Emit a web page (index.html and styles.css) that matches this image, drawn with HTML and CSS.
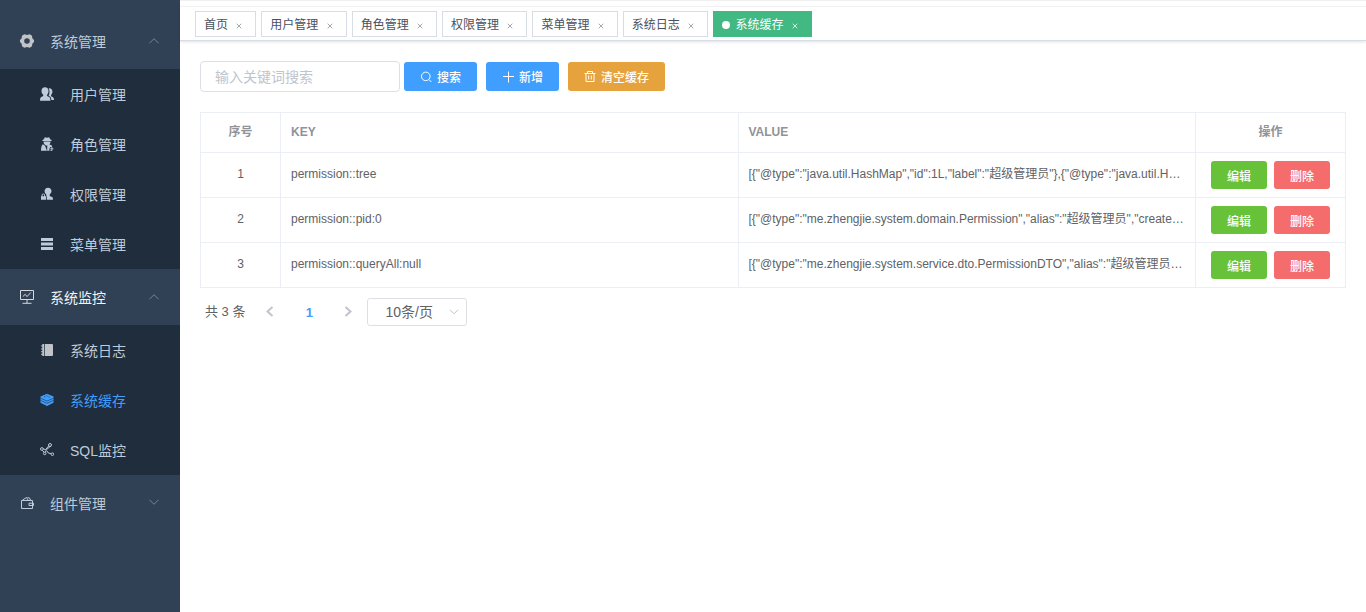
FILE: index.html
```html
<!DOCTYPE html>
<html lang="zh-CN">
<head>
<meta charset="utf-8">
<title>系统缓存</title>
<link rel="stylesheet" href="styles.css">
</head>
<body>
<div class="app">
  <nav class="sidebar">
    <button class="menu-title" type="button">
      <svg class="icon icon-grey" viewBox="0 0 14 14"><path fill-rule="evenodd" d="M4.300 0.200 7 1 9.700 0.200 12 1.700 12.300 4.300 14 6V8L12.300 9.700 12 12.300 9.700 13.800 7 13 4.300 13.800 2 12.300 1.700 9.700 0 8V6L1.700 4.300 2 1.700ZM7 4.200A2.800 2.800 0 1 0 7 9.800 2.800 2.800 0 0 0 7 4.200Z"/></svg>
      <span>系统管理</span>
      <svg class="arrow" viewBox="0 0 12 12"><path d="M1.500 8.200 6 3.700l4.500 4.500"/></svg>
    </button>
    <div class="submenu">
      <a class="menu-item" href="#"><svg class="icon" viewBox="0 0 14 14"><path d="M5 0.200C7.200 0.200 8.500 1.700 8.500 4 8.500 5.700 7.900 7 7.100 7.800V9L9.600 10.300Q10.400 10.800 10.400 13.800H0Q0 10.800 0.800 10.300L3.200 9V7.800C2.200 7 1.500 5.700 1.500 4 1.500 1.700 2.800 0.200 5 0.200Z"/><path d="M8.700 1.400C10.900 1 12.400 2.600 12.400 4.800 12.400 6.200 11.800 7.300 11.100 8V9.200L13 10.200Q14 10.800 14 13H11.300Q11.300 10.400 10.300 9.700L8.700 8.700V8.200Q9.500 6.800 9.500 4.500 9.500 2.800 8.700 1.400Z"/></svg><span>用户管理</span></a>
      <a class="menu-item" href="#"><svg class="icon" viewBox="0 0 14 14"><path d="M3.900 2.200 4.800 0.200 7 0.700 9.200 0.200 10.100 2.200 11.600 3V4H2.400V3ZM3.500 4.500H10.500Q10.500 7.900 7 8.700 3.500 7.900 3.500 4.500ZM2.800 7.300 5 8.800 7 13.800H1Q1 9 2.800 7.300ZM7.200 9.300 9.500 7.600 11.600 8.300 12.200 10 10 10.200 9.400 12 9.400 13.800H7.200Z"/><path d="M10.300 11.200H11.400V10.300H12.400V11.200H13.300V12.200H12.400V13.800H10.300V12.900H11.400V12.200H10.300Z"/></svg><span>角色管理</span></a>
      <a class="menu-item" href="#"><svg class="icon" viewBox="0 0 14 14"><path d="M8 0.800C10.100 0.800 11.500 2.200 11.500 4 11.500 5.700 10.500 6.700 9.700 7.500V9L12.500 10.300Q13 10.700 13 12.800H7V9.500H6.300V7.500C5.200 6.600 4.600 5.500 4.600 4 4.600 2.200 5.900 0.800 8 0.800Z"/><path fill-rule="evenodd" d="M1 9.300H1.600V8.200Q1.600 6.400 3.300 6.400 5 6.400 5 8.200V9.300H6.200V12.800H1ZM2.500 9.300H4.100V8.200Q4.100 7.300 3.300 7.300 2.500 7.300 2.500 8.200Z"/></svg><span>权限管理</span></a>
      <a class="menu-item" href="#"><svg class="icon" viewBox="0 0 14 14"><path d="M1 1h12v3H1zM1 5.500h12v3H1zM1 10h12v3H1z"/></svg><span>菜单管理</span></a>
    </div>
    <button class="menu-title menu-title-active" type="button">
      <svg class="icon icon-line icon-light" viewBox="0 0 14 14"><path d="M0.500 0.500H13.500V9.500H0.500ZM7 9.500V13M2.500 13.300H11.500M2.800 6.600 5.200 4.300 7 6.600 10.800 2.500"/></svg>
      <span>系统监控</span>
      <svg class="arrow" viewBox="0 0 12 12"><path d="M1.500 8.200 6 3.700l4.500 4.500"/></svg>
    </button>
    <div class="submenu">
      <a class="menu-item" href="#"><svg class="icon icon-grey" viewBox="0 0 14 14"><path d="M5 1H12Q13 1 13 2V12Q13 13 12 13H5ZM2.300 1H4.300V13H2.300V11.800H1V10.800H2.300V9.200H1V8.200H2.300V6.400H1V5.400H2.300V3.600H1V2.600H2.300Z"/></svg><span>系统日志</span></a>
      <a class="menu-item menu-item-active" href="#"><svg class="icon" viewBox="0 0 14 14"><path d="M7 0.800 13.500 3.600V9.800L7 13 0.500 9.800V3.600Z"/><path class="cut" d="M0.500 5.200 7 8.100 13.500 5.200M0.500 7.400 7 10.300 13.500 7.400M4 3.500 5.500 4.200M6.300 2.500 7.800 3.200M8.500 3.700 10 4.400"/></svg><span>系统缓存</span></a>
      <a class="menu-item" href="#"><svg class="icon icon-line" viewBox="0 0 14 14"><circle cx="1.900" cy="6" r="1.400"/><circle cx="10" cy="2" r="1.500"/><circle cx="4.700" cy="10.400" r="1.300"/><circle cx="12.400" cy="11.200" r="1.300"/><path d="M3.200 5.600 5.300 6.800 8.900 2.800M2.300 7.300 4.200 9.300M5.300 9.300 6.700 6.400 10.500 3.300M7 8 8 9.800 11.200 10.800"/></svg><span>SQL监控</span></a>
    </div>
    <button class="menu-title" type="button">
      <svg class="icon icon-line" viewBox="0 0 14 14"><path d="M1.500 4.500H12.500V12.500H1.500ZM2.500 4 6.500 1.500 8 4M7.500 1.500 9.500 2 10.500 4M12.500 7.200H9V9.500H13.500V7.200Z"/></svg>
      <span>组件管理</span>
      <svg class="arrow" viewBox="0 0 12 12"><path d="M1.500 2.800 6 7.300l4.500-4.500"/></svg>
    </button>
  </nav>

  <div class="main">
    <header class="navbar"></header>
    <div class="tags">
      <div class="tag"><a href="#">首页</a> <button class="close" type="button" aria-label="关闭"><svg viewBox="0 0 16 16"><path d="M5.700 5.700l4.600 4.600M10.300 5.700l-4.600 4.600"/></svg></button></div>
      <div class="tag"><a href="#">用户管理</a> <button class="close" type="button" aria-label="关闭"><svg viewBox="0 0 16 16"><path d="M5.700 5.700l4.600 4.600M10.300 5.700l-4.600 4.600"/></svg></button></div>
      <div class="tag"><a href="#">角色管理</a> <button class="close" type="button" aria-label="关闭"><svg viewBox="0 0 16 16"><path d="M5.700 5.700l4.600 4.600M10.300 5.700l-4.600 4.600"/></svg></button></div>
      <div class="tag"><a href="#">权限管理</a> <button class="close" type="button" aria-label="关闭"><svg viewBox="0 0 16 16"><path d="M5.700 5.700l4.600 4.600M10.300 5.700l-4.600 4.600"/></svg></button></div>
      <div class="tag"><a href="#">菜单管理</a> <button class="close" type="button" aria-label="关闭"><svg viewBox="0 0 16 16"><path d="M5.700 5.700l4.600 4.600M10.300 5.700l-4.600 4.600"/></svg></button></div>
      <div class="tag"><a href="#">系统日志</a> <button class="close" type="button" aria-label="关闭"><svg viewBox="0 0 16 16"><path d="M5.700 5.700l4.600 4.600M10.300 5.700l-4.600 4.600"/></svg></button></div>
      <div class="tag tag-active"><span class="dot"></span> <a href="#">系统缓存</a> <button class="close" type="button" aria-label="关闭"><svg viewBox="0 0 16 16"><path d="M5.700 5.700l4.600 4.600M10.300 5.700l-4.600 4.600"/></svg></button></div>
    </div>

    <main class="content">
      <div class="toolbar">
        <input class="search" type="text" placeholder="输入关键词搜索" aria-label="输入关键词搜索">
        <div class="actions">
          <button class="btn btn-primary" type="button"><svg viewBox="0 0 12 12"><circle cx="5.800" cy="5.400" r="4.300"/><path d="M8.900 8.500 11.400 11"/></svg><span>搜索</span></button>
          <button class="btn btn-primary" type="button"><svg viewBox="0 0 12 12"><path d="M6.500 0.500V11.500M1 5.500H12"/></svg><span>新增</span></button>
          <button class="btn btn-warning" type="button"><svg viewBox="0 0 12 12"><path d="M0.500 2.500H11.500M3.500 2.500V0.500H8.500V2.500M2 2.500V10.500H10V2.500M4.700 4.500V8.500M7.300 4.500V8.500"/></svg><span>清空缓存</span></button>
        </div>
      </div>

      <table class="table">
        <colgroup><col class="col-index"><col><col><col class="col-ops"></colgroup>
        <thead>
          <tr><th class="center">序号</th><th>KEY</th><th>VALUE</th><th class="center">操作</th></tr>
        </thead>
        <tbody>
          <tr>
            <td class="center">1</td><td>permission::tree</td>
            <td><div class="ellipsis">[{"@type":"java.util.HashMap","id":1L,"label":"超级管理员"},{"@type":"java.util.HashMap","id":2L}]</div></td>
            <td class="ops-cell"><div class="ops"><button class="btn-small btn-success" type="button">编辑</button><button class="btn-small btn-danger" type="button">删除</button></div></td>
          </tr>
          <tr>
            <td class="center">2</td><td>permission::pid:0</td>
            <td><div class="ellipsis">[{"@type":"me.zhengjie.system.domain.Permission","alias":"超级管理员","createTime":1543827724000}]</div></td>
            <td class="ops-cell"><div class="ops"><button class="btn-small btn-success" type="button">编辑</button><button class="btn-small btn-danger" type="button">删除</button></div></td>
          </tr>
          <tr>
            <td class="center">3</td><td>permission::queryAll:null</td>
            <td><div class="ellipsis">[{"@type":"me.zhengjie.system.service.dto.PermissionDTO","alias":"超级管理员","createTime":1543827724000}]</div></td>
            <td class="ops-cell"><div class="ops"><button class="btn-small btn-success" type="button">编辑</button><button class="btn-small btn-danger" type="button">删除</button></div></td>
          </tr>
        </tbody>
      </table>

      <div class="pagination">
        <span class="total">共 3 条</span>
        <button class="page" type="button" aria-label="上一页"><svg viewBox="0 0 12 12"><path d="M8.500 1 3.500 5.500 8.500 10"/></svg></button>
        <button class="page page-current" type="button">1</button>
        <button class="page" type="button" aria-label="下一页"><svg viewBox="0 0 12 12"><path d="M3.500 1 8.500 5.500 3.500 10"/></svg></button>
        <div class="size">
          <select aria-label="每页条数"><option>10条/页</option><option>20条/页</option></select>
          <svg class="size-arrow" viewBox="0 0 12 12"><path d="M2 3.800 6 7.800l4-4"/></svg>
        </div>
      </div>
    </main>
  </div>
</div>
</body>
</html>
```
FILE: styles.css
```css
* { box-sizing: border-box; }
body {
  margin: 0;
  color: #606266;
  background: #fff;
  font: 12px/24px "Liberation Sans", "Noto Sans CJK SC", sans-serif;
}
button, input, select { margin: 0; font-family: inherit; }
button { padding: 0; border: 0; background: none; cursor: pointer; }
a { color: inherit; text-decoration: none; }

.app { display: flex; min-height: 100vh; }

.sidebar {
  flex: none;
  width: 180px;
  padding-top: 13px;
  color: #bfcbd9;
  background: #304156;
}
.menu-title, .menu-item {
  display: flex;
  align-items: center;
  gap: 16px;
  width: 100%;
  color: inherit;
  font-size: 14px;
  line-height: 24px;
}
.menu-title { height: 56px; padding: 0 20px; }
.menu-title-active { color: #f4f4f5; }
.submenu { background: #1f2d3d; }
.menu-item { height: 50px; padding: 0 20px 0 40px; }
.menu-title span, .menu-item span { padding-top: 2px; }
.menu-item-active { color: #409eff; }
.icon { width: 14px; height: 14px; fill: currentColor; }
.icon-grey { fill: #c0c4c8; }
.icon-line { fill: none; stroke: currentColor; }
.icon-light { color: #d5d9de; }
.cut { fill: none; stroke: #1f2d3d; stroke-width: 0.6; }
.arrow { width: 12px; height: 12px; margin-left: auto; fill: none; stroke: #7b8491; }

.main { flex: 1; min-width: 0; }
.navbar { height: 7px; border-top: 1px solid #f0f0f0; border-bottom: 1px solid #f6f6f6; }
.tags {
  display: flex;
  gap: 5px;
  height: 34px;
  padding: 4px 15px 0;
  border-bottom: 1px solid #d8dce5;
  box-shadow: 0 1px 3px rgba(0, 0, 0, 0.12);
}
.tag {
  height: 26px;
  padding: 0 8px;
  border: 1px solid #d8dce5;
  color: #495060;
  line-height: 26px;
  white-space: nowrap;
}
.tag-active { border-color: #42b983; color: #fff; background: #42b983; }
.dot {
  display: inline-block;
  width: 8px;
  height: 8px;
  margin-right: 2px;
  border-radius: 50%;
  background: #fff;
}
.close { width: 16px; height: 16px; color: #a3a7af; vertical-align: middle; }
.tag-active .close { color: #d5efe3; }
.close svg { display: block; fill: none; stroke: currentColor; }

.content { padding: 20px; }
.toolbar { display: flex; align-items: center; gap: 4px; margin-bottom: 20px; }
.search {
  width: 200px;
  height: 31px;
  padding: 0 14px;
  border: 1px solid #dcdfe6;
  border-radius: 4px;
  color: #606266;
  font-size: 14px;
}
.search::placeholder { color: #c0c4cc; }
.actions { display: flex; gap: 9px; }
.btn {
  display: flex;
  align-items: center;
  gap: 5px;
  height: 29px;
  padding: 0 16px;
  border-radius: 3px;
  color: #fff;
  font-size: 12px;
  font-weight: 500;
}
.btn svg { width: 12px; height: 12px; fill: none; stroke: currentColor; }
.btn-primary { background: #409eff; }
.btn-warning { background: #e6a23c; }

.table { width: 100%; border-collapse: collapse; table-layout: fixed; }
.col-index { width: 80px; }
.col-ops { width: 150px; }
.table th, .table td { padding: 0 10px 2px; border: 1px solid #ebeef5; text-align: left; }
.table th { height: 40px; color: #909399; font-weight: 700; }
.table td { height: 45px; }
.table .ops-cell { padding: 0 10px; }
.table .center { text-align: center; }
.ellipsis { overflow: hidden; text-overflow: ellipsis; white-space: nowrap; }
.ops { display: flex; justify-content: center; gap: 7px; }
.btn-small {
  width: 56px;
  height: 28px;
  border-radius: 3px;
  color: #fff;
  font-size: 12px;
  font-weight: 500;
}
.btn-success { background: #67c23a; }
.btn-danger { background: #f56c6c; }

.pagination { display: flex; align-items: center; padding: 10px 5px; font-size: 13px; }
.total { margin-right: 11px; }
.page {
  display: flex;
  align-items: center;
  justify-content: center;
  width: 28px;
  height: 28px;
  color: #c0c4cc;
  font-size: 13px;
}
.page svg { width: 12px; height: 12px; fill: none; stroke: currentColor; stroke-width: 2; }
.page-current { width: 50px; color: #409eff; font-weight: 700; }
.size { position: relative; margin-left: 5px; }
.size select {
  display: block;
  width: 100px;
  height: 28px;
  padding: 0 17px;
  border: 1px solid #dcdfe6;
  border-radius: 3px;
  appearance: none;
  color: #606266;
  background: #fff;
  font-size: 14px;
}
.size-arrow {
  position: absolute;
  top: 8px;
  right: 7px;
  width: 12px;
  height: 12px;
  fill: none;
  stroke: #c0c4cc;
  pointer-events: none;
}
```
